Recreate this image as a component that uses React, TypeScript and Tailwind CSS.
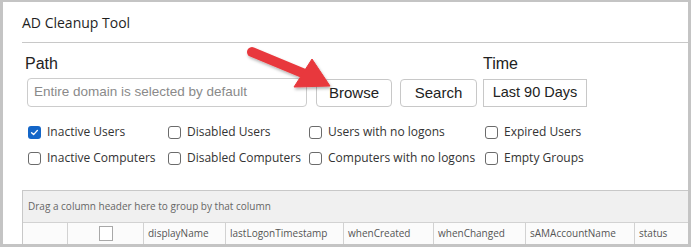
import React from 'react';

const labelFont = { fontFamily: '"Open Sans", "Noto Sans", sans-serif' };
const arial = { fontFamily: '"Liberation Sans", Arial, sans-serif' };

const options = [
  ['Inactive Users', 'Disabled Users', 'Users with no logons', 'Expired Users'],
  ['Inactive Computers', 'Disabled Computers', 'Computers with no logons', 'Empty Groups'],
];
const colWidths = ['w-[140px]', 'w-[141px]', 'w-[176px]', 'w-[150px]'];

const columns = [
  { name: '', w: 'w-[45px]' },
  { name: '#check', w: 'w-[76px]' },
  { name: 'displayName', w: 'w-[82px]' },
  { name: 'lastLogonTimestamp', w: 'w-[118px]' },
  { name: 'whenCreated', w: 'w-[90px]' },
  { name: 'whenChanged', w: 'w-[92px]' },
  { name: 'sAMAccountName', w: 'w-[109px]' },
  { name: 'status', w: 'flex-1' },
];

function Check({ checked }: { checked?: boolean }) {
  if (checked) {
    return (
      <span className="w-[13px] h-[13px] rounded-[3px] bg-[#1466c8] flex items-center justify-center shrink-0">
        <svg width="9" height="9" viewBox="0 0 9 9">
          <path d="M1.6 4.7 L3.6 6.6 L7.4 2.4" fill="none" stroke="white" strokeWidth="1.4" strokeLinecap="round" strokeLinejoin="round" />
        </svg>
      </span>
    );
  }
  return <span className="w-[13px] h-[13px] rounded-[3px] border border-[#6b6b6b] bg-white shrink-0" />;
}

function Arrow() {
  return (
    <svg className="absolute left-0 top-0 pointer-events-none" width="691" height="247">
      <defs>
        <filter id="sh" x="-20%" y="-20%" width="140%" height="140%">
          <feDropShadow dx="1" dy="2" stdDeviation="1.5" floodColor="#000" floodOpacity="0.3" />
        </filter>
      </defs>
      <g filter="url(#sh)" fill="#e8383c" stroke="#e8383c">
        <line x1="249" y1="50" x2="302" y2="72" strokeWidth="10" strokeLinecap="round" />
        <polygon points="327,84 291,85 309,57" strokeWidth="1" strokeLinejoin="round" />
      </g>
    </svg>
  );
}

export default function App() {
  return (
    <div className="relative w-[691px] h-[247px] overflow-hidden bg-white border-[#c4c4c4] border-l-[3px] border-t-[2px] border-r-[3px] border-b-[3px]">
      <div className="ml-[19px]">
        <div className="h-[41px] flex items-center border-b border-[#c8c8c8]">
          <span className="text-[14px] text-[#1f1f1f]" style={labelFont}>
            AD Cleanup Tool
          </span>
        </div>

        <div className="flex mt-[11px]" style={arial}>
          <div className="flex flex-col">
            <div className="pl-[3px] text-[16px] leading-[20px] text-[#222]">Path</div>
            <div className="flex items-end mt-[4px] ml-[5px] h-[29px]">
              <div className="w-[280px] h-[29px] rounded-[4px] border border-[#cccccc] flex items-center pl-[6px] text-[13.5px] text-[#8a8a8a]">
                Entire domain is selected by default
              </div>
              <button className="ml-[9px] w-[76px] h-[28px] rounded-[4px] border border-[#c8c8c8] bg-white text-[15px] text-[#222]">
                Browse
              </button>
              <button className="ml-[8px] w-[77px] h-[28px] rounded-[4px] border border-[#c8c8c8] bg-white text-[15px] text-[#222]">
                Search
              </button>
            </div>
          </div>
          <div className="flex flex-col ml-[6px]">
            <div className="text-[16px] leading-[20px] text-[#222]">Time</div>
            <div className="flex items-end mt-[4px] h-[29px]">
              <button className="w-[104px] h-[28px] border border-[#c8c8c8] bg-white text-[14.5px] text-[#222]">
                Last 90 Days
              </button>
            </div>
          </div>
        </div>

        <div className="mt-[12px] pl-[6px]" style={labelFont}>
          {options.map((row, r) => (
            <div key={r} className="flex h-[26px] items-center">
              {row.map((label, c) => (
                <div key={label} className={`${colWidths[c]} flex items-center gap-[6px] text-[12px] text-[#333]`}>
                  <Check checked={r === 0 && c === 0} />
                  <span>{label}</span>
                </div>
              ))}
            </div>
          ))}
        </div>

        <div className="mt-[19px] border-l border-t border-[#c8c8c8]" style={labelFont}>
          <div className="h-[31px] bg-[#f0f0f0] flex items-center pl-[5px] text-[10px] text-[#666]">
            Drag a column header here to group by that column
          </div>
          <div className="h-[22px] flex border-t border-[#d2d2d2] bg-[#fbfbfb]">
            {columns.map((col, i) => (
              <div
                key={i}
                className={`${col.w} h-full flex items-center ${col.name === '#check' ? 'justify-center' : 'pl-[4px]'} ${i < columns.length - 1 ? 'border-r border-[#d2d2d2]' : ''} text-[10px] text-[#555]`}
              >
                {col.name === '#check' ? (
                  <span className="w-[14px] h-[15px] border border-[#a8a8a8] bg-white" />
                ) : (
                  col.name
                )}
              </div>
            ))}
          </div>
        </div>
      </div>
      <Arrow />
    </div>
  );
}
